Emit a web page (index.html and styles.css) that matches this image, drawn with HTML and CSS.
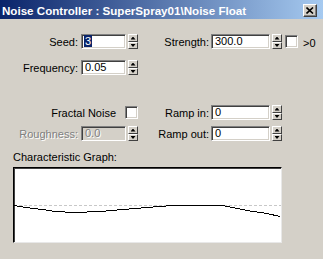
FILE: index.html
```html
<!DOCTYPE html>
<html lang="en">
<head>
    <meta charset="UTF-8">
    <title>Noise Controller</title>
    <link rel="stylesheet" href="styles.css">
</head>
<body>
    <div class="window">
        <div class="titlebar">
            <span class="title">Noise Controller : SuperSpray01\Noise Float</span>
            <div class="close-btn">
                <svg width="8" height="7" viewBox="0 0 8 7"><path d="M0.5 0.5 L7 6.5 M7 0.5 L0.5 6.5" stroke="#000" stroke-width="1.6"/></svg>
            </div>
        </div>

        <div class="panel">
            <div class="row row-1">
                <div class="cell-left">
                    <span class="label">Seed:</span>
                    <div class="field field-short"><span class="selected">3</span></div>
                    <div class="spinner"><div class="spin-up"></div><div class="spin-down"></div></div>
                </div>
                <div class="cell-right">
                    <span class="label label-right">Strength:</span>
                    <div class="field field-long">300.0</div>
                    <div class="spinner"><div class="spin-up"></div><div class="spin-down"></div></div>
                    <div class="check check-gt"></div>
                    <span class="gt">&gt;0</span>
                </div>
            </div>

            <div class="row row-2">
                <div class="cell-left">
                    <span class="label">Frequency:</span>
                    <div class="field field-short">0.05</div>
                    <div class="spinner"><div class="spin-up"></div><div class="spin-down"></div></div>
                </div>
            </div>

            <div class="row row-3">
                <div class="cell-left">
                    <span class="label label-fractal">Fractal Noise</span>
                    <div class="check"></div>
                </div>
                <div class="cell-right">
                    <span class="label label-right">Ramp in:</span>
                    <div class="field field-long">0</div>
                    <div class="spinner"><div class="spin-up"></div><div class="spin-down"></div></div>
                </div>
            </div>

            <div class="row row-4">
                <div class="cell-left">
                    <span class="label disabled">Roughness:</span>
                    <div class="field field-short field-disabled">0.0</div>
                    <div class="spinner"><div class="spin-up"></div><div class="spin-down"></div></div>
                </div>
                <div class="cell-right">
                    <span class="label label-right">Ramp out:</span>
                    <div class="field field-long">0</div>
                    <div class="spinner"><div class="spin-up"></div><div class="spin-down"></div></div>
                </div>
            </div>

            <div class="graph-caption">Characteristic Graph:</div>
            <div class="graph">
                <svg width="267" height="74" viewBox="0 0 267 74" shape-rendering="crispEdges">
                    <line x1="0" y1="37.5" x2="267" y2="37.5" stroke="#c8c8c8" stroke-dasharray="3 2"/>
                    <polyline fill="none" stroke="#000" stroke-width="1"
                        points="0,37.5 6,38.5 19,40.5 29,41.5 41,43.5 61,44.5 86,43.5 109,41.5 133,39.5 158,37.5 208,37.5 219,39.5 233,42.5 253,45.5 266,48.5"/>
                </svg>
            </div>
        </div>
    </div>
</body>
</html>
```

FILE: styles.css
```css
body{
    margin: 0;
    background-color: #d4d0c8;
    font-family: "Liberation Sans", Arial, sans-serif;
    font-size: 11px;
    color: #000;
}
.window{
    width: 323px;
    height: 259px;
    background-color: #d4d0c8;
    overflow: hidden;
}

/* title bar */
.titlebar{
    height: 19px;
    display: flex;
    align-items: center;
    background: linear-gradient(to right, #0a246a, #a6caf0);
}
.title{
    flex: 1;
    padding-left: 2px;
    padding-top: 2px;
    color: #fff;
    font-weight: bold;
    font-size: 11.6px;
    white-space: nowrap;
}
.close-btn{
    width: 14px;
    height: 13px;
    margin-right: 6px;
    margin-top: 2px;
    box-sizing: border-box;
    background-color: #d4d0c8;
    border: 1px solid;
    border-color: #fff #404040 #404040 #fff;
    box-shadow: inset -1px -1px #808080;
    display: flex;
    align-items: center;
    justify-content: center;
}
.close-btn svg{
    display: block;
    margin-left: -1px;
    margin-top: -1px;
}

/* rows of controls */
.panel{
    padding-top: 15px;
}
.row{
    display: flex;
    height: 15px;
    align-items: center;
}
.row-2{ margin-top: 11px; }
.row-3{ margin-top: 30px; }
.row-4{ margin-top: 6px; }

.cell-left{
    width: 138px;
    display: flex;
    justify-content: flex-end;
    align-items: center;
}
.cell-right{
    display: flex;
    align-items: center;
}
.label{
    margin-right: 3px;
    white-space: nowrap;
}
.label-right{
    width: 71px;
    margin-right: 2px;
    text-align: right;
}
.label-fractal{
    margin-right: 9px;
}
.disabled{
    color: #808080;
    text-shadow: 1px 1px #fff;
}

/* sunken edit box */
.field{
    height: 15px;
    box-sizing: border-box;
    background-color: #fff;
    border: 1px solid;
    border-color: #808080 #fff #fff #808080;
    box-shadow: inset 1px 1px #404040, inset -1px -1px #d4d0c8;
    padding-left: 3px;
    line-height: 13px;
}
.field-short{ width: 45px; }
.field-long{ width: 59px; }
.field-disabled{
    background-color: #d4d0c8;
    color: #808080;
    text-shadow: 1px 1px #fff;
}
.selected{
    background-color: #0a246a;
    color: #fff;
    padding: 0 1px;
    margin-left: -1px;
}

/* spinner arrows */
.spinner{
    width: 10px;
    height: 15px;
    margin-left: 2px;
    display: flex;
    flex-direction: column;
}
.spin-up,
.spin-down{
    box-sizing: border-box;
    background-color: #d4d0c8;
    border: 1px solid;
    border-color: #fff #404040 #404040 #fff;
    display: flex;
    align-items: center;
    justify-content: center;
}
.spin-up{ height: 8px; }
.spin-down{ height: 7px; }
.spin-up::after,
.spin-down::after{
    content: "";
    width: 5px;
    height: 3px;
    background-color: #000;
}
.spin-up::after{ clip-path: polygon(50% 0, 100% 100%, 0 100%); }
.spin-down::after{ clip-path: polygon(0 0, 100% 0, 50% 100%); }

/* checkbox */
.check{
    width: 13px;
    height: 13px;
    box-sizing: border-box;
    background-color: #fff;
    border: 1px solid;
    border-color: #808080 #fff #fff #808080;
    box-shadow: inset 1px 1px #404040, inset -1px -1px #d4d0c8;
}
.check-gt{ margin-left: 3px; }
.gt{
    margin-left: 5px;
    padding-top: 3px;
}

/* graph */
.graph-caption{
    margin-top: 10px;
    margin-left: 13px;
    line-height: 13px;
}
.graph{
    width: 269px;
    height: 76px;
    margin-top: 3px;
    margin-left: 13px;
    box-sizing: border-box;
    background-color: #fff;
    border: 1px solid;
    border-color: #000 #e8e8e8 #e8e8e8 #000;
    box-shadow: inset 1px 1px #404040;
}
.graph svg{
    display: block;
}
```
